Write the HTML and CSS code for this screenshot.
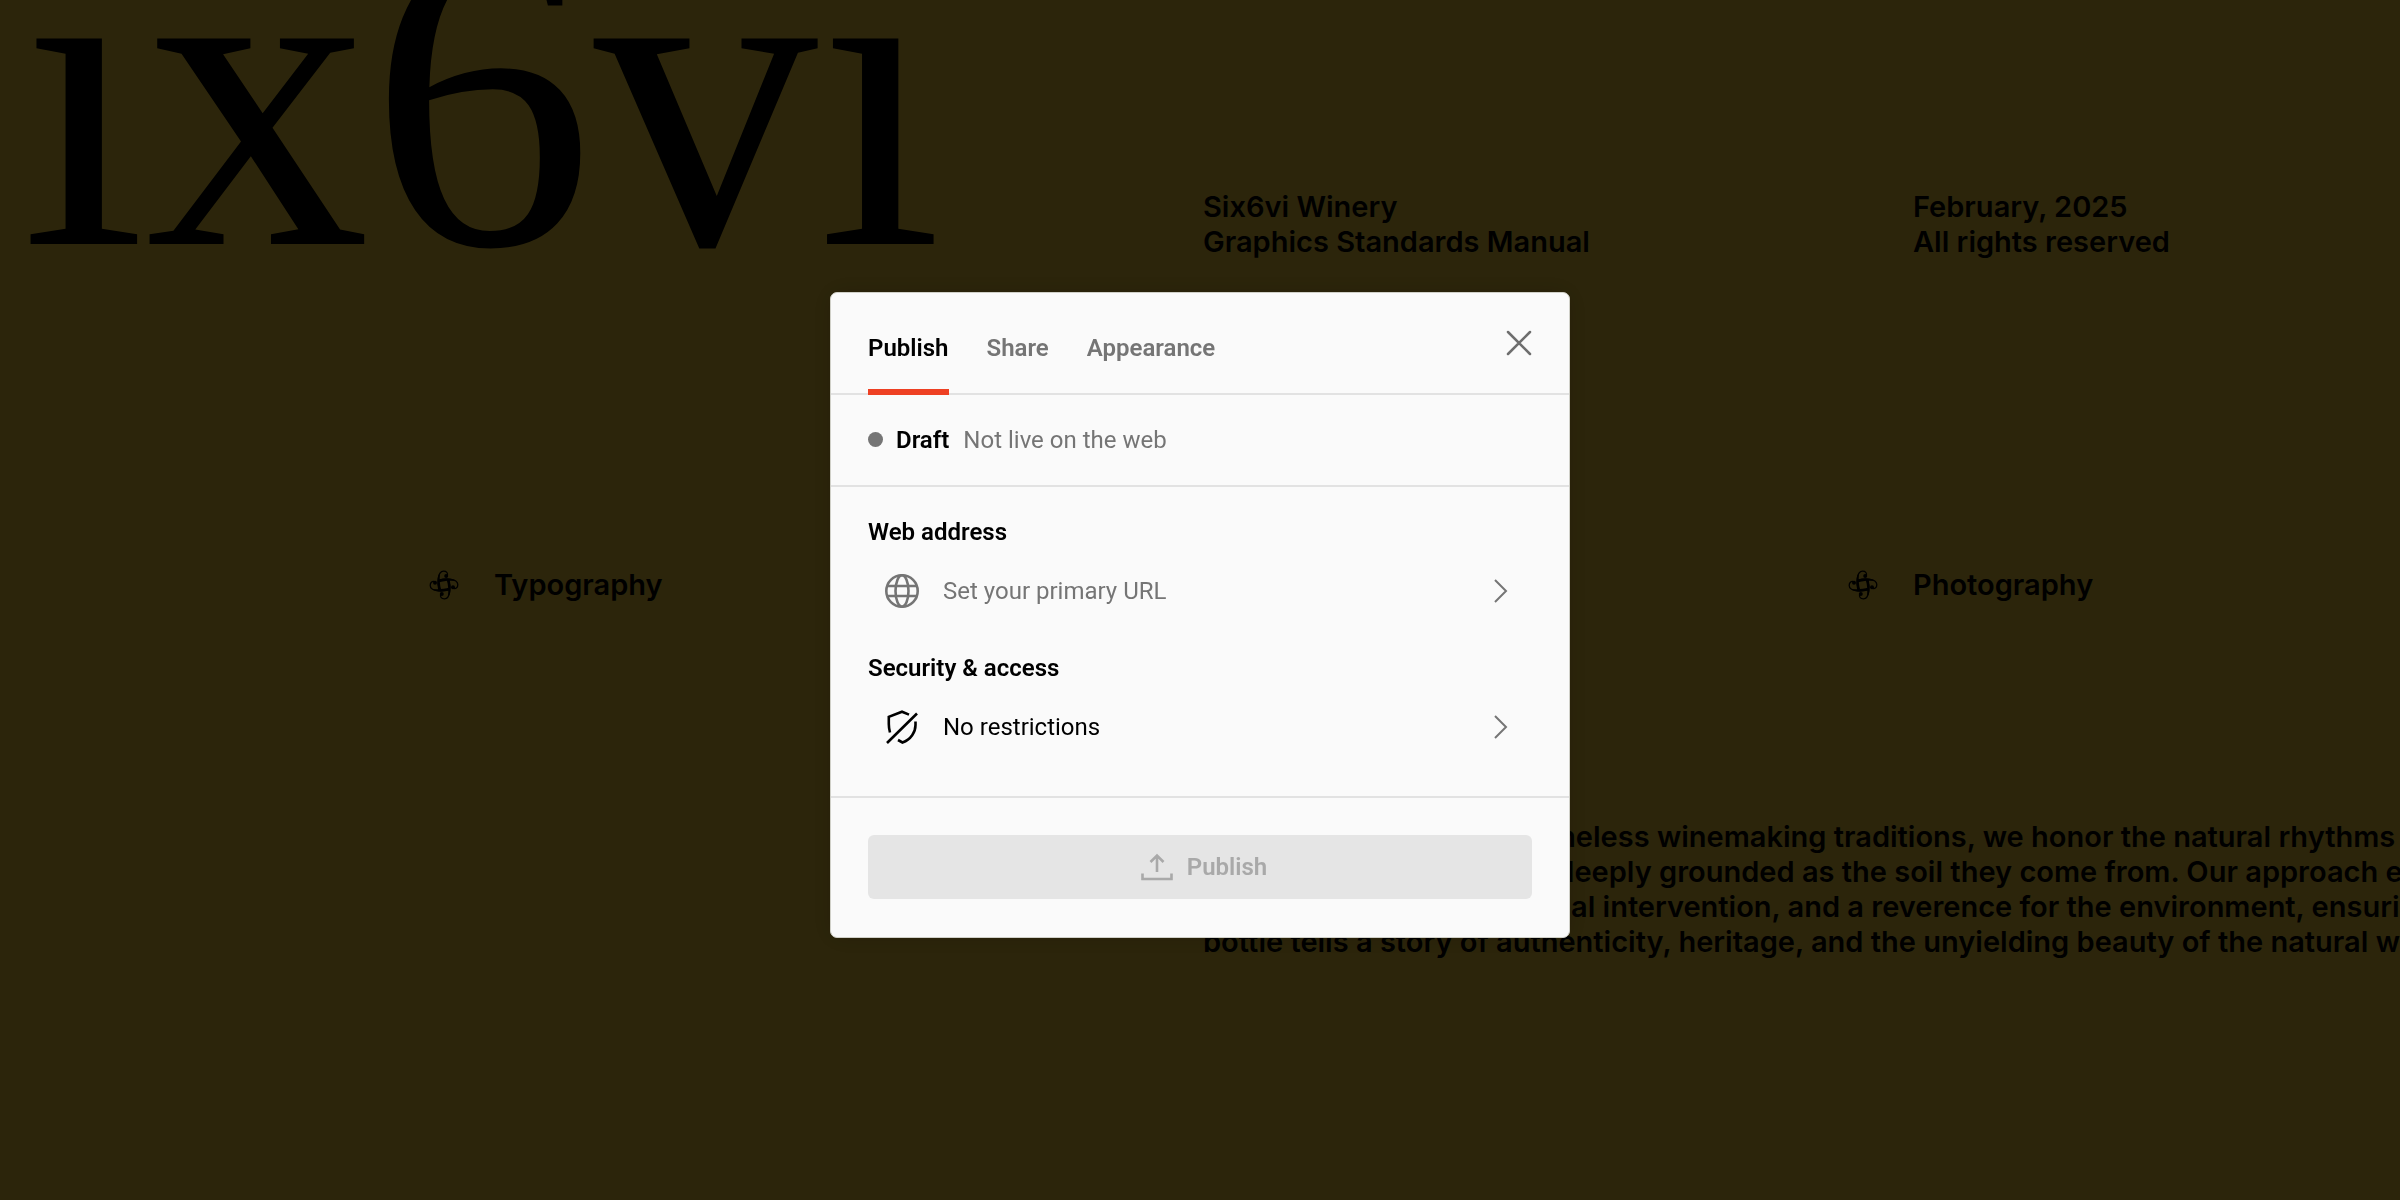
FILE: index.html
```html
<!DOCTYPE html>
<html lang="en">
<head>
<meta charset="UTF-8">
<meta name="viewport" content="width=device-width, initial-scale=1.0">
<title>Six6vi Winery - Graphics Standards Manual</title>
<link rel="stylesheet" href="styles.css">
</head>
<body>
<svg class="sprite" aria-hidden="true">
<defs>
<g id="swirl">
<path d="M10.500 20.500C8 13 8.500 1.400 14.500 1.200C17.500 1.100 19 3 18.400 5.500" fill="none" stroke="currentColor" stroke-width="1.300"/>
<path d="M9.500 20.500C7.500 13 8.200 6 11 3C10.400 9 10.600 15 12.400 20.500z"/>
<circle cx="17.200" cy="6" r="2"/>
</g>
<symbol id="ornament" viewBox="0 0 30 30">
<use href="#swirl"/>
<use href="#swirl" transform="rotate(90 15 15)"/>
<use href="#swirl" transform="rotate(180 15 15)"/>
<use href="#swirl" transform="rotate(270 15 15)"/>
</symbol>
</defs>
</svg>

<main class="manual">
<header class="masthead">
<h1 class="wordmark">Six6vi</h1>
<p class="title">Six6vi Winery<br>Graphics Standards Manual</p>
<p class="date">February, 2025<br>All rights reserved</p>
</header>
<nav class="sections">
<a class="section typography" href="#typography"><svg class="ornament"><use href="#ornament"/></svg>Typography</a>
<a class="section photography" href="#photography"><svg class="ornament"><use href="#ornament"/></svg>Photography</a>
</nav>
<div class="intro">
<p class="story">Inspired by nature, and timeless winemaking traditions, we honor the natural rhythms<br>
of the land with wines as deeply grounded as the soil they come from. Our approach embraces<br>
patience, true craft, minimal intervention, and a reverence for the environment, ensuring each<br>
bottle tells a story of authenticity, heritage, and the unyielding beauty of the natural world.</p>
</div>
</main>

<div class="overlay">
<div class="modal" role="dialog" aria-label="Publish">
<div class="modal-header">
<div class="tabs" role="tablist">
<button class="tab active" role="tab" aria-selected="true">Publish</button>
<button class="tab" role="tab" aria-selected="false">Share</button>
<button class="tab" role="tab" aria-selected="false">Appearance</button>
</div>
<button class="close" aria-label="Close">
<svg width="26" height="26" viewBox="0 0 26 26" fill="none" stroke="currentColor" stroke-width="2.500" stroke-linecap="round"><path d="M2 2l22 22M24 2L2 24"/></svg>
</button>
</div>
<div class="status">
<span class="dot"></span>
<strong>Draft</strong>
<span class="status-text">Not live on the web</span>
</div>
<div class="settings">
<h2>Web address</h2>
<button class="setting muted">
<svg class="setting-icon" viewBox="0 0 34 34" fill="none" stroke="currentColor" stroke-width="2.600"><circle cx="17" cy="17" r="15.700"/><ellipse cx="17" cy="17" rx="6.500" ry="15.700"/><path d="M2 12h30M2 22h30"/></svg>
<span>Set your primary URL</span>
<svg class="chevron" viewBox="0 0 14 26" fill="none" stroke="currentColor" stroke-width="2"><path d="M1 2l11 11L1 24"/></svg>
</button>
<h2>Security &amp; access</h2>
<button class="setting">
<svg class="setting-icon" viewBox="0 0 34 34" fill="none" stroke="currentColor" stroke-width="2.600"><path d="M5 22.500Q3.800 18 3.800 14V6.800L17 1.700L24 4.600M30.500 11.500V15C30.500 22 26 29.500 17.500 32.500L13 30M2 33L32 3.500"/></svg>
<span>No restrictions</span>
<svg class="chevron" viewBox="0 0 14 26" fill="none" stroke="currentColor" stroke-width="2"><path d="M1 2l11 11L1 24"/></svg>
</button>
</div>
<div class="modal-footer">
<button class="publish" disabled>
<svg width="32" height="28" viewBox="0 0 32 28" fill="none" stroke="currentColor" stroke-width="2.600"><path d="M16 19V3M9.500 9L16 2.500L22.500 9M1.500 20.500V26H30.500V20.500"/></svg>
Publish
</button>
</div>
</div>
</div>
</body>
</html>
```
FILE: styles.css
```css
* { box-sizing: border-box; }
body { margin: 0; background-color: #dcb937; color: #000; font-family: Inter, sans-serif; overflow: hidden; }
h1, h2, p { margin: 0; }
button { font: inherit; color: inherit; background: none; border: none; padding: 0; cursor: pointer; }
.sprite { display: none; }

/* manual page */
.manual { min-height: 100vh; overflow: hidden; font-size: 29px; font-weight: 600; line-height: 35px; }
.masthead, .sections, .intro { display: grid; grid-template-columns: minmax(0, 429fr) minmax(0, 709fr) minmax(0, 710fr) minmax(0, 552fr); }
.masthead { align-items: end; }
.wordmark { grid-column: 1 / 3; align-self: start; height: 259px; margin-left: -228px; font-family: "Liberation Serif", serif; font-size: 448px; font-weight: 400; line-height: 186px; white-space: nowrap; }
.title, .date { padding-left: 65px; white-space: nowrap; }
.sections { margin-top: 308px; }
.section { display: flex; align-items: center; gap: 35px; color: inherit; text-decoration: none; }
.typography { grid-column: 2; }
.photography { grid-column: 4; }
.ornament { width: 30px; height: 30px; }
.intro { margin-top: 217px; }
.story { grid-column: 3 / 5; padding-left: 65px; white-space: nowrap; }

/* publish dialog */
.overlay { position: fixed; inset: 0; display: flex; align-items: center; justify-content: center; padding-top: 29px; background-color: rgba(0, 0, 0, 0.8); }
.modal { width: 740px; max-width: 100%; border: 1px solid #d0d0c8; border-radius: 7px; background-color: #fafafa; box-shadow: 0 0 24px rgba(0, 0, 0, 0.2); font-family: Roboto, sans-serif; font-size: 24px; line-height: 30px; }
.modal-header { display: flex; justify-content: space-between; align-items: center; padding: 0 37px; border-bottom: 2px solid #e2e2e2; }
.tabs { display: flex; gap: 38px; margin-bottom: -2px; }
.tab { padding: 40px 0 26px; border-bottom: 6px solid transparent; font-weight: 600; color: #757575; }
.tab.active { color: #000; border-color: #ee4023; }
.close { display: flex; color: #6e6e6e; }
.status { display: flex; align-items: center; padding: 30px 37px; border-bottom: 2px solid #e2e2e2; }
.status strong { margin: 0 14px 0 13px; font-weight: 600; }
.status-text { color: #757575; }
.dot { width: 15px; height: 15px; border-radius: 50%; background-color: #757575; }
.settings { padding: 30px 37px 37px; border-bottom: 2px solid #e2e2e2; }
.settings h2 { margin-bottom: 12px; font-size: 24px; font-weight: 600; }
.setting { display: flex; align-items: center; gap: 24px; width: 100%; height: 64px; padding: 0 24px 0 17px; text-align: left; }
.setting + h2 { margin-top: 30px; }
.muted { color: #757575; }
.setting-icon { width: 34px; height: 34px; }
.chevron { width: 14px; height: 26px; margin-left: auto; color: #757575; }
.modal-footer { padding: 37px 37px 38px; }
.publish { display: flex; align-items: center; justify-content: center; gap: 14px; width: 100%; height: 64px; padding-left: 8px; border-radius: 6px; background-color: #e5e5e5; color: #a9a9a9; font-weight: 600; cursor: not-allowed; }
```
